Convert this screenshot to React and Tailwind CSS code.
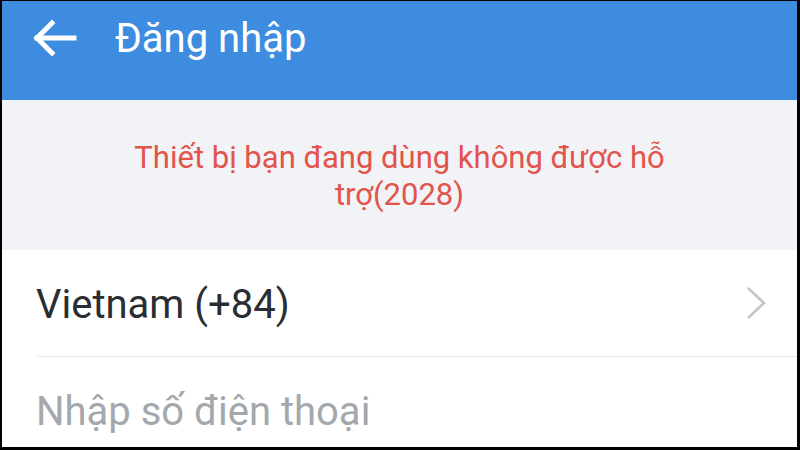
export default function App() {
  return (
    <div className="w-[800px] h-[450px] bg-black pt-px pl-[2px] pr-[3px] pb-[3px]" style={{ fontFamily: 'Roboto, "Noto Sans", sans-serif' }}>
      <div className="w-full h-full bg-white flex flex-col overflow-hidden">
        <div className="h-[99px] bg-[#3e8ce0] flex items-start shrink-0">
          <div className="w-[113px] h-[76px] flex items-center pl-[30px]">
            <svg width="46" height="40" viewBox="0 0 46 40" fill="none" stroke="white" strokeWidth="5" strokeLinecap="square">
              <path d="M5 19H42" />
              <path d="M20 4L5 19L20 34" strokeLinejoin="miter" />
            </svg>
          </div>
          <div className="h-[76px] flex items-center text-white text-[40px] leading-none">Đăng nhập</div>
        </div>
        <div className="h-[150px] bg-[#f1f3f6] flex items-center justify-center shrink-0">
          <p className="w-[560px] text-center text-[#e2544c] text-[31px] leading-[37px] pt-[2px]">
            Thiết bị bạn đang dùng không được hỗ trợ(2028)
          </p>
        </div>
        <div className="pl-[34px]">
          <div className="h-[107px] flex items-center justify-between border-b border-[#ececec] pr-[30px]">
            <span className="text-[40px] text-[#2a2d31] leading-none pt-[3px]">Vietnam (+84)</span>
            <svg width="22" height="34" viewBox="0 0 22 34" fill="none" stroke="#c4c4c4" strokeWidth="2.5">
              <path d="M3 2L19 17L3 32" />
            </svg>
          </div>
          <div className="h-[110px] flex items-center">
            <span className="text-[40px] text-[#a3a8ad] leading-none">Nhập số điện thoại</span>
          </div>
        </div>
      </div>
    </div>
  );
}
